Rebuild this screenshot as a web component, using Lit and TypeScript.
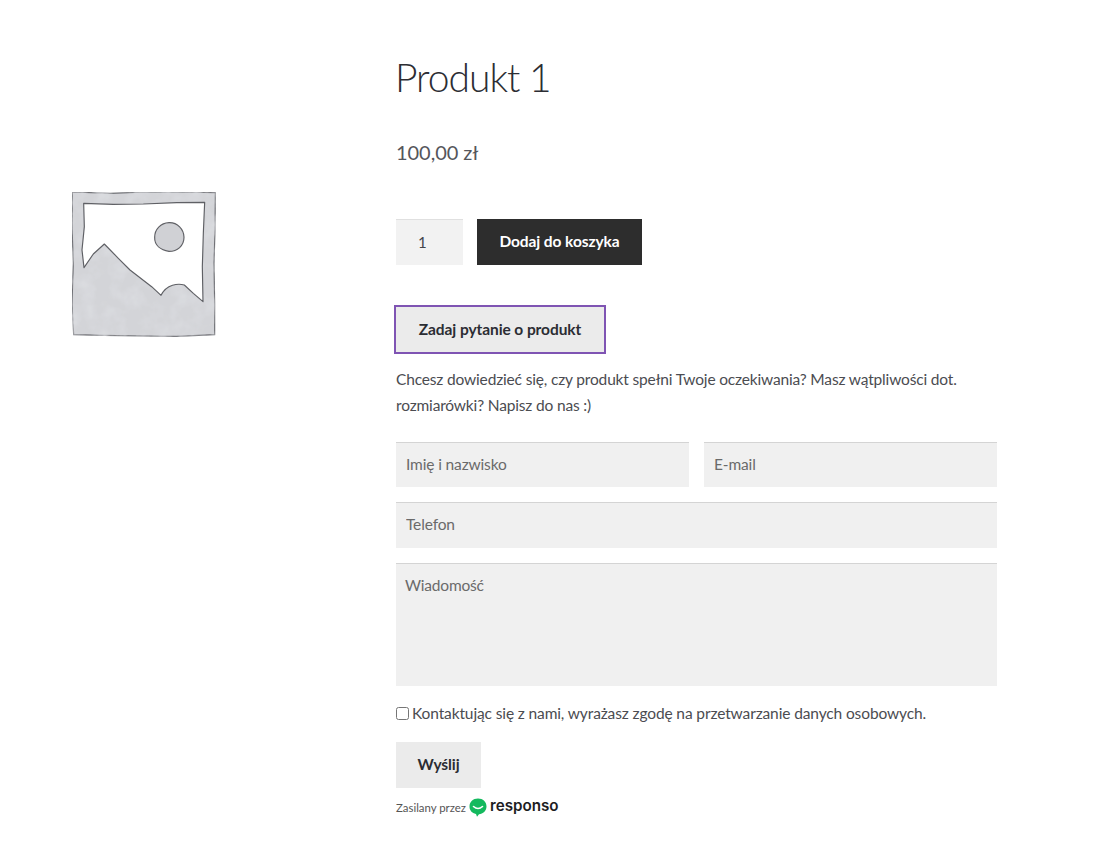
import { LitElement, html, css } from "lit";
import { customElement } from "lit/decorators.js";

@customElement("app-root")
export class AppRoot extends LitElement {
  static styles = css`
    :host {
      display: block;
      width: 1115px;
      height: 855px;
      background: #fff;
      overflow: hidden;
      font-family: "Lato", "Noto Sans", sans-serif;
      color: #4b4c51;
      font-size: 16px;
    }
    * { box-sizing: border-box; }
    .page { display: flex; height: 100%; }
    .gallery { width: 396px; padding: 190px 0 0 70px; flex: none; }
    .gallery svg { display: block; width: 150px; height: 150px; }
    .summary { width: 601px; flex: none; display: flex; flex-direction: column; padding-top: 53px; }
    h1 {
      margin: 0 0 0 -1px;
      font-size: 39px;
      line-height: 48px;
      font-weight: 300;
      letter-spacing: -1px;
      color: #2c2d33;
      height: 48px;
    }
    .price { margin-top: 37px; font-size: 20px; line-height: 28px; height: 28px; color: #55565b; letter-spacing: -0.05px; }
    .cart { margin-top: 53px; display: flex; gap: 14px; }
    .qty {
      width: 67px; height: 46px; background: #f2f2f2; border: 0;
      border-top: 1px solid #e0e0e0; padding: 0 0 2px 22px; display: flex; align-items: center;
      font-size: 15px; color: #43454b;
    }
    button {
      font-family: inherit; border: 0; font-weight: 700; font-size: 15.5px; cursor: pointer;
      padding: 0 0 2px; display: block; letter-spacing: -0.08px;
    }
    .add { width: 165px; height: 46px; background: #2d2d2d; color: #fff; }
    .ask {
      margin-top: 42px; width: 208px; height: 45px; background: #ebebeb; color: #2b2d33;
      outline: 2px solid #7f54b3; outline-offset: 0; border: 0;
    }
    p { margin: 14px 0 0; line-height: 26px; font-size: 15.5px; height: 52px; letter-spacing: -0.16px; }
    .row { display: flex; gap: 15px; margin-top: 24px; }
    .row + .row { margin-top: 15px; }
    input.f, textarea {
      font-family: inherit; font-size: 15.5px; letter-spacing: -0.14px; color: #43454b; background: #f0f0f0; border: 0;
      border-top: 1px solid #d4d4d4; border-radius: 0; padding: 0 10px 2px; height: 45px; outline: none; display: block; width: 100%;
      min-width: 0;
    }
    input.tel { height: 46px; padding-bottom: 3px; }
    input.f::placeholder, textarea::placeholder { color: #6a6a6a; opacity: 1; }
    .name { flex: 293 1 0; }
    .mail { flex: 293 1 0; }
    textarea { height: 123px; padding: 12px 9px 0; resize: none; margin-top: 15px; letter-spacing: -0.2px; }
    .consent { margin-top: 17px; display: flex; align-items: center; gap: 3px; font-size: 15.5px; letter-spacing: -0.12px; line-height: 20px; height: 20px; }
    .consent input { margin: 0; width: 13px; height: 13px; }
    .send { margin-top: 19px; width: 85px; height: 46px; background: #ebebeb; color: #2b2d33; }
    .powered { margin-top: 9px; display: flex; align-items: center; gap: 3px; font-size: 11.4px; height: 20px; color: #555; }
    .powered svg { width: 18px; height: 19px; flex: none; }
    .brand { font-family: "Inter", sans-serif; font-weight: 600; font-size: 15.2px; color: #1d1d1f; position: relative; top: -2px; letter-spacing: 0; }
  `;

  render() {
    return html`
      <div class="page">
        <div class="gallery">
          <svg viewBox="60 60 450 450" aria-hidden="true">
            <defs>
              <filter id="blot" x="0" y="0" width="100%" height="100%">
                <feTurbulence type="fractalNoise" baseFrequency="0.022" numOctaves="3" seed="4" result="n"/>
                <feColorMatrix in="n" type="matrix" values="0 0 0 0 0.72  0 0 0 0 0.73  0 0 0 0 0.76  1.6 0 0 0 -0.62" result="c"/>
                <feComposite in="c" in2="SourceAlpha" operator="in" result="t"/>
                <feMerge><feMergeNode in="SourceGraphic"/><feMergeNode in="t"/></feMerge>
              </filter>
            </defs>
            <path d="M67 66 L180 70 L290 66 L400 66 L496 68 L495 180 L492 280 L494 400 L494 494 L380 499 L280 498 L160 496 L71 494 L66 400 L70 280 L66 170 Z" fill="#d3d4d8" stroke="#6f7075" stroke-width="3.5" stroke-linejoin="round" filter="url(#blot)"/>
            <path d="M101 100 L190 103 L280 102 L380 98 L464 97 L460 190 L457 290 L459 395 L430 370 L403 345 C385 340 350 342 333 376 L305 350 L240 300 L205 265 L163 222 L130 252 L102 293 L96 240 L103 170 Z" fill="#fff" stroke="#5f6065" stroke-width="3.5" stroke-linejoin="round"/>
            <path d="M357 158 C382 157 402 178 402 202 C402 228 382 244 357 244 C332 240 313 226 314 202 C314 178 332 159 357 158 Z" fill="#d0d1d5" stroke="#5f6065" stroke-width="3.5"/>
          </svg>
        </div>
        <div class="summary">
          <h1>Produkt 1</h1>
          <div class="price">100,00 zł</div>
          <div class="cart">
            <div class="qty">1</div>
            <button class="add">Dodaj do koszyka</button>
          </div>
          <button class="ask">Zadaj pytanie o produkt</button>
          <p>Chcesz dowiedzieć się, czy produkt spełni Twoje oczekiwania? Masz wątpliwości dot. rozmiarówki? Napisz do nas :)</p>
          <div class="row">
            <div class="name"><input class="f" placeholder="Imię i nazwisko" /></div>
            <div class="mail"><input class="f" placeholder="E-mail" /></div>
          </div>
          <div class="row"><input class="f tel" placeholder="Telefon" /></div>
          <textarea placeholder="Wiadomość"></textarea>
          <label class="consent"><input type="checkbox" />Kontaktując się z nami, wyrażasz zgodę na przetwarzanie danych osobowych.</label>
          <button class="send">Wyślij</button>
          <div class="powered">
            <span>Zasilany przez</span>
            <svg viewBox="0 0 18 19" aria-hidden="true">
              <path d="M9 0.5 C14 0.5 17.5 4 17.5 8.5 C17.5 13 14 16 10 16.2 L8 18.8 L7 16 C3 15 0.5 12.5 0.5 8.5 C0.5 4 4 0.5 9 0.5 Z" fill="#14b95e"/>
              <path d="M4.5 8.5 Q9 12.5 13.5 8.5" fill="none" stroke="#fff" stroke-width="1.6" stroke-linecap="round"/>
            </svg>
            <span class="brand">responso</span>
          </div>
        </div>
      </div>
    `;
  }
}
